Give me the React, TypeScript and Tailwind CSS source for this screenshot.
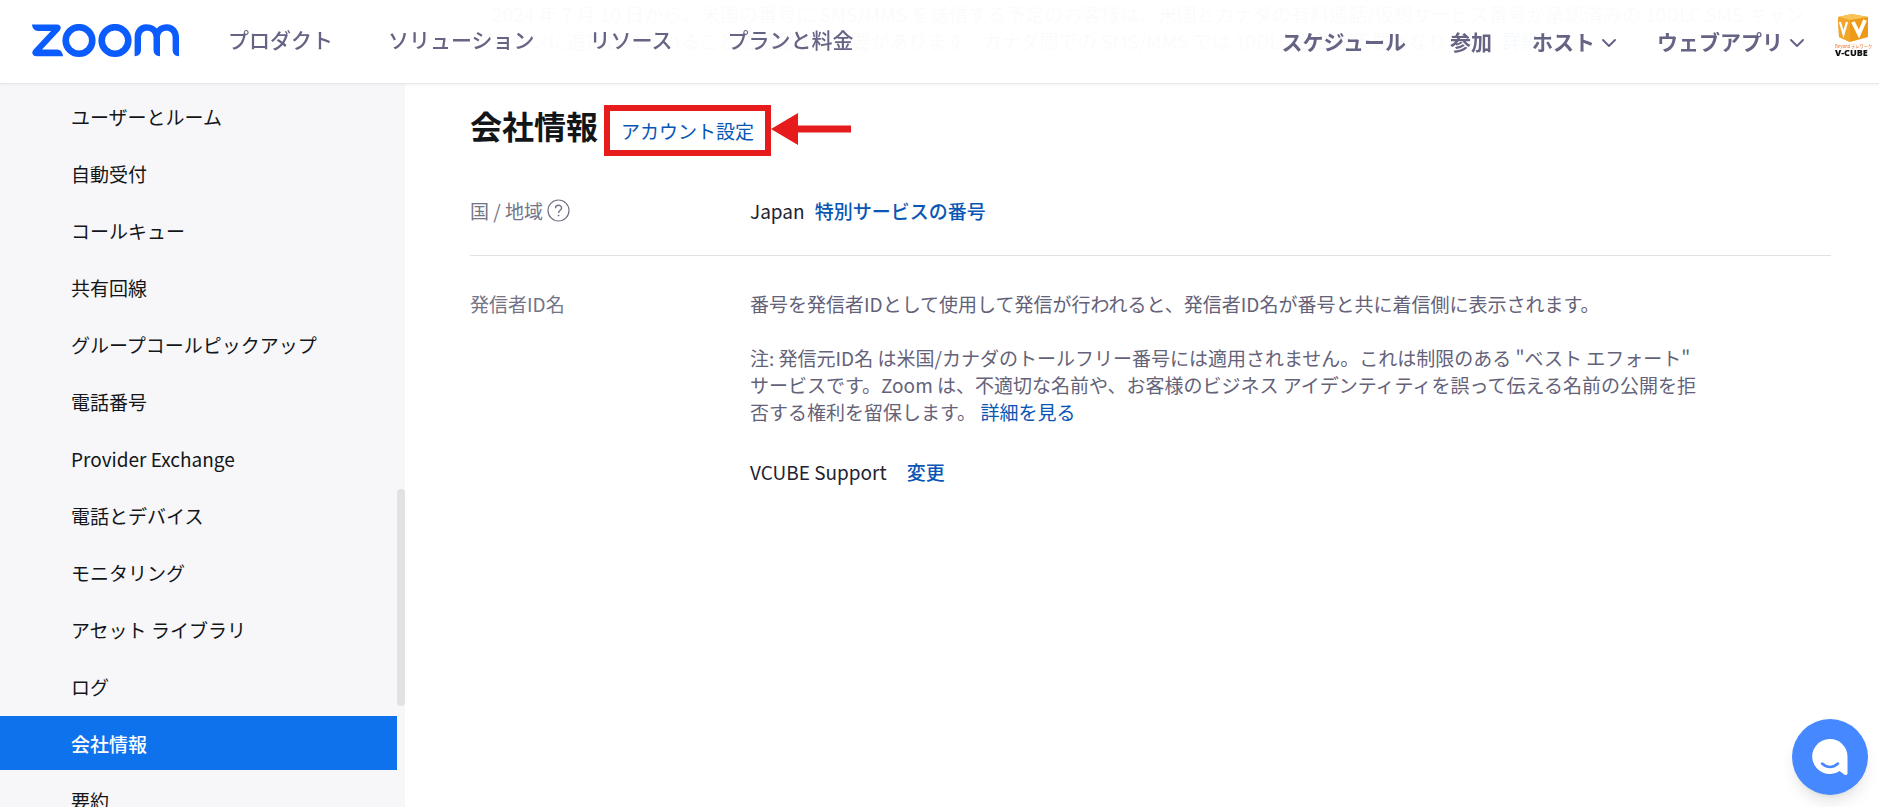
import { ChevronDown } from "lucide-react"

const leftNav = [
  { label: "プロダクト", href: "#products" },
  { label: "ソリューション", href: "#solutions" },
  { label: "リソース", href: "#resources" },
  { label: "プランと料金", href: "#pricing" },
]

const sideItems = [
  "ユーザーとルーム",
  "自動受付",
  "コールキュー",
  "共有回線",
  "グループコールピックアップ",
  "電話番号",
  "Provider Exchange",
  "電話とデバイス",
  "モニタリング",
  "アセット ライブラリ",
  "ログ",
  "会社情報",
  "要約",
]

const activeItem = "会社情報"

const ZoomLogo = () => (
  <svg width="148" height="34" viewBox="0 0 148 34" fill="none" stroke="#0b5cff" aria-label="zoom" role="img">
    {/* z */}
    <path
      d="M0 0.5H25C28.5 0.5 30 4 27.5 6.8L10 25.6H25C28.5 25.6 30.8 28.5 31 32.2H4.5C0.5 32.2 -1 28.5 1.5 25.8L19 7H6C2.5 7 0.2 4 0 0.5Z"
      fill="#0b5cff"
      stroke="none"
    />
    <circle cx="47" cy="16.5" r="13.3" strokeWidth="6.6" />
    <circle cx="83" cy="16.5" r="13.3" strokeWidth="6.6" />
    {/* m */}
    <path
      d="M102.6 32.2V13C102.6 6 107 0.2 114 0.2C118.5 0.2 122 1.5 124.7 4.5C127.5 1.5 131 0.2 135 0.2C142 0.2 147 6 147 13V32.2C143 32.2 140.6 29.5 140.6 26V13.5C140.6 9.5 138 6.8 134.5 6.8C130.5 6.8 128 9.5 128 13.5V32.2C124 32.2 121.5 29.5 121.5 26V13.5C121.5 9.5 119 6.8 115.2 6.8C111.5 6.8 109 9.5 109 13.5V26C109 29.5 106.5 32.2 102.6 32.2Z"
      fill="#0b5cff"
      stroke="none"
    />
  </svg>
)

const VCubeLogo = () => (
  <svg width="38" height="44" viewBox="0 0 38 44" role="img" aria-label="V-CUBE">
    <path d="M3 3L17 0L33 3V23L15 28L4 23Z" fill="#ee9a16" />
    <path d="M3 3L17 0L33 3L15 6Z" fill="#f9c455" />
    <path d="M3 3L15 6V28L4 23Z" fill="#f0a52c" />
    <path d="M5 8L8.5 20L12 8" fill="none" stroke="#fff" strokeWidth="2.2" />
    <path d="M18 8L24 20L30 6" fill="none" stroke="#fff" strokeWidth="3.8" />
    <text x="0" y="34" fontSize="4.2" fill="#f08a4b" fontFamily="Noto Sans CJK JP, sans-serif" fontWeight="500">
      Beyond テレワーク
    </text>
    <text x="0" y="42" fontSize="9" fill="#111" fontFamily="Open Sans, sans-serif" fontWeight="800">
      V-CUBE
    </text>
  </svg>
)

const Header = () => (
  <header className="fixed inset-x-0 top-0 z-20 flex h-[84px] items-center border-b border-gray-200 bg-white/97 pl-8 pr-1.5 text-[21px] leading-8 text-[#666484] shadow-xs">
    <a href="#home" className="mb-0.5 shrink-0">
      <ZoomLogo />
    </a>
    <nav className="mb-1.5 ml-12 flex gap-[55px] whitespace-nowrap font-medium">
      {leftNav.map((item) => (
        <a key={item.label} href={item.href}>
          {item.label}
        </a>
      ))}
    </nav>
    <div className="mb-0.5 ml-auto flex items-center gap-9 whitespace-nowrap font-bold">
      <a href="#schedule" className="mr-2">スケジュール</a>
      <a href="#join" className="mr-1">参加</a>
      <button className="flex items-center gap-0.5">
        ホスト
        <ChevronDown className="mt-1 size-6" />
      </button>
      <button className="flex items-center gap-0.5">
        ウェブアプリ
        <ChevronDown className="mt-1 size-6" />
      </button>
    </div>
    <button className="mb-3 ml-[26px] shrink-0" aria-label="V-CUBE">
      <VCubeLogo />
    </button>
  </header>
)

const Sidebar = () => (
  <aside className="relative w-[405px] shrink-0 overflow-hidden bg-[#f7f7fa] pr-2 pt-[89px]">
    <ul>
      {sideItems.map((item) => (
        <li key={item} className="mb-[3px]">
          <a
            href="#menu"
            className={
              item === activeItem
                ? "flex h-[54px] items-center bg-[#0e72ed] pl-[71px] font-medium text-white"
                : "flex h-[54px] items-center pl-[71px] text-[#131619]"
            }
          >
            {item}
          </a>
        </li>
      ))}
    </ul>
    {/* Scroll thumb */}
    <div className="absolute right-0 top-[489px] h-[217px] w-2 rounded-full bg-[#e2e2e2]" />
  </aside>
)

const ChatButton = () => (
  <button
    className="fixed bottom-3 right-[11px] z-20 flex size-[76px] items-center justify-center rounded-full bg-[#4688ff] shadow-lg"
    aria-label="チャット"
  >
    <svg width="36" height="38" viewBox="0 0 36 38">
      <path d="M18 1A17.5 17.5 0 1 0 27.5 33L32.5 36.7C34 37.6 35.5 37 35.5 35V18.5A17.5 17.5 0 0 0 18 1Z" fill="#fff" />
      <path d="M10 25.5Q18 32.5 26 25.5" fill="none" stroke="#4688ff" strokeWidth="2.5" strokeLinecap="round" />
    </svg>
  </button>
)

export default function App() {
  return (
    <div
      lang="ja"
      className="flex h-screen overflow-hidden bg-white font-['Noto_Sans_CJK_JP',sans-serif] text-[19px] leading-[27px] text-[#646279]"
    >
      <Header />
      <Sidebar />
      <main className="min-w-0 flex-1 pl-[65px] pr-12">
        {/* Announcement scrolled under the header */}
        <p className="pl-[22px] pr-6 text-[#747487]">
          2024 年 7 月 10 日から、米国の番号に SMS/MMS を送信する予定のお客様は、米国とカナダの有料通話/仮想サービス番号が承認済みの 10DLC SMS キャンペーンに追加されていることを確認する必要があります。カナダ間での SMS/MMS では 10DLC 登録が不要となります。
          <a href="#more" className="text-[#0956b5]">詳細</a>
        </p>

        <div className="mt-[51px] flex items-start">
          <h1 className="text-[32px] font-bold leading-10 text-[#131619]">会社情報</h1>
          <a href="#account" className="ml-1.5 border-6 border-[#e61c1c] px-[11px] py-[6px] text-[#0956b5]">
            アカウント設定
          </a>
          <svg width="80" height="32" viewBox="0 0 80 32" className="mt-2" fill="#e61c1c" aria-hidden="true">
            <path d="M0 16L27 0V12.5H80V19.5H27V32Z" />
          </svg>
        </div>

        <section className="mt-[41px] flex border-b border-[#dfe3e8] pb-[31px]">
          <div className="flex w-[280px] shrink-0 items-center gap-1 text-[#747487]">
            国 / 地域
            <svg width="23" height="23" viewBox="0 0 23 23" fill="none" stroke="currentColor" role="img" aria-label="ヘルプ">
              <circle cx="11.5" cy="11.5" r="10.5" strokeWidth="1.2" />
              <path d="M8.5 9.2C8.5 5.3 14.6 5.3 14.6 9C14.6 11.3 11.6 11.3 11.6 14" strokeWidth="1.4" />
              <circle cx="11.6" cy="16.5" r="0.5" fill="currentColor" />
            </svg>
          </div>
          <p className="text-[#222230]">
            Japan
            <a href="#numbers" className="ml-[10px] font-medium text-[#0956b5]">特別サービスの番号</a>
          </p>
        </section>

        <section className="mt-[34px] flex">
          <div className="w-[280px] shrink-0 text-[#747487]">発信者ID名</div>
          <div className="max-w-[960px]">
            <p>番号を発信者IDとして使用して発信が行われると、発信者ID名が番号と共に着信側に表示されます。</p>
            <p className="mt-[27px]">
              注: 発信元ID名 は米国/カナダのトールフリー番号には適用されません。これは制限のある "ベスト エフォート" サービスです。Zoom は、不適切な名前や、お客様のビジネス アイデンティティを誤って伝える名前の公開を拒否する権利を留保します。{" "}
              <a href="#details" className="text-[#0956b5]">詳細を見る</a>
            </p>
            <p className="mt-[33px] text-[#222230]">
              VCUBE Support
              <button className="ml-5 font-medium text-[#0956b5]">変更</button>
            </p>
          </div>
        </section>
      </main>
      <ChatButton />
    </div>
  )
}
